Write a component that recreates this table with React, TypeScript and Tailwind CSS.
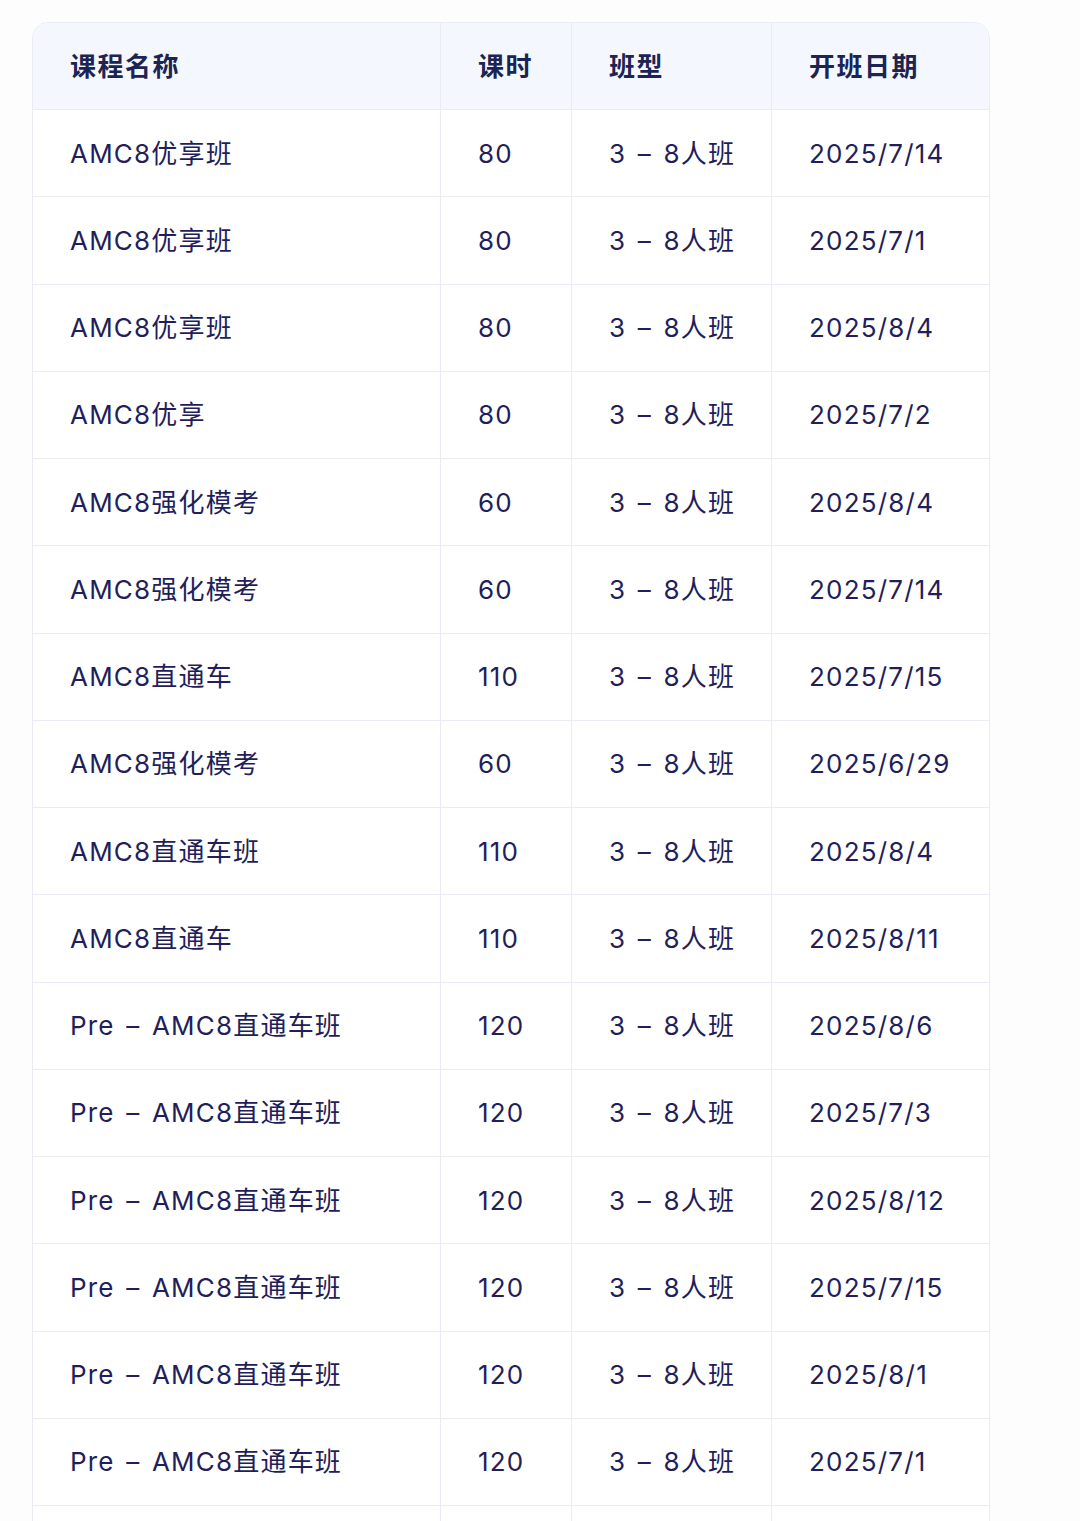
const rows: [string, string, string, string][] = [
  ["AMC8优享班", "80", "3 – 8人班", "2025/7/14"],
  ["AMC8优享班", "80", "3 – 8人班", "2025/7/1"],
  ["AMC8优享班", "80", "3 – 8人班", "2025/8/4"],
  ["AMC8优享", "80", "3 – 8人班", "2025/7/2"],
  ["AMC8强化模考", "60", "3 – 8人班", "2025/8/4"],
  ["AMC8强化模考", "60", "3 – 8人班", "2025/7/14"],
  ["AMC8直通车", "110", "3 – 8人班", "2025/7/15"],
  ["AMC8强化模考", "60", "3 – 8人班", "2025/6/29"],
  ["AMC8直通车班", "110", "3 – 8人班", "2025/8/4"],
  ["AMC8直通车", "110", "3 – 8人班", "2025/8/11"],
  ["Pre – AMC8直通车班", "120", "3 – 8人班", "2025/8/6"],
  ["Pre – AMC8直通车班", "120", "3 – 8人班", "2025/7/3"],
  ["Pre – AMC8直通车班", "120", "3 – 8人班", "2025/8/12"],
  ["Pre – AMC8直通车班", "120", "3 – 8人班", "2025/7/15"],
  ["Pre – AMC8直通车班", "120", "3 – 8人班", "2025/8/1"],
  ["Pre – AMC8直通车班", "120", "3 – 8人班", "2025/7/1"],
  ["", "", "", ""],
];

const cols = "grid grid-cols-[407px_131px_200px_218px]";

export default function App() {
  return (
    <div
      className="min-h-screen bg-[#fdfdfe] pt-[22px] pl-[32px] overflow-hidden h-[1521px]"
      style={{ fontFamily: 'Inter, "Noto Sans CJK SC", sans-serif' }}
    >
      <div className="w-[958px] rounded-t-[16px] border border-[#ebebf4] overflow-hidden bg-white">
        <div className={`${cols} h-[87px] bg-[#f4f7fe] border-b border-[#ebebf4] text-[26px] font-semibold tracking-[1.5px] text-[#1b2452]`}>
          <div className="flex items-center pl-[37px]">课程名称</div>
          <div className="flex items-center pl-[37px] border-l border-[#ebebf4]">课时</div>
          <div className="flex items-center pl-[37px] border-l border-[#ebebf4]">班型</div>
          <div className="flex items-center pl-[37px] border-l border-[#ebebf4]">开班日期</div>
        </div>
        {rows.map((r, i) => (
          <div
            key={i}
            className={`${cols} h-[87.25px] border-b border-[#ebebf4] text-[26px] tracking-[1.2px] [word-spacing:3px] text-[#221e5a]`}
          >
            <div className="flex items-center pl-[37px]">{r[0]}</div>
            <div className="flex items-center pl-[37px] border-l border-[#ebebf4]">{r[1]}</div>
            <div className="flex items-center pl-[37px] border-l border-[#ebebf4]">{r[2]}</div>
            <div className="flex items-center pl-[37px] border-l border-[#ebebf4]">{r[3]}</div>
          </div>
        ))}
      </div>
    </div>
  );
}
